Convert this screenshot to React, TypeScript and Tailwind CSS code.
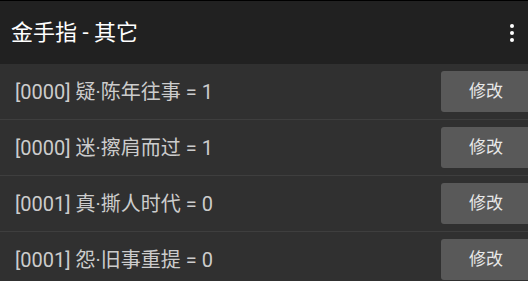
import React from 'react';

const cheats = [
  { id: '0000', name: '疑·陈年往事', value: 1 },
  { id: '0000', name: '迷·擦肩而过', value: 1 },
  { id: '0001', name: '真·撕人时代', value: 0 },
  { id: '0001', name: '怨·旧事重提', value: 0 },
];

export default function App() {
  return (
    <div
      className="w-[528px] h-[281px] overflow-hidden bg-black pt-px"
      style={{ fontFamily: 'Roboto, "Noto Sans CJK SC", sans-serif' }}
    >
      <header className="h-[63px] bg-[#212121] flex items-center justify-between pl-[11px] pr-[13px]">
        <h1 className="text-[22px] text-white">金手指 - 其它</h1>
        <button className="flex flex-col items-center gap-[3px] w-[6px]">
          <span className="w-[4px] h-[4px] rounded-full bg-white" />
          <span className="w-[4px] h-[4px] rounded-full bg-white" />
          <span className="w-[4px] h-[4px] rounded-full bg-white" />
        </button>
      </header>
      <ul className="bg-[#303030]">
        {cheats.map((c, i) => (
          <li
            key={i}
            className="h-[56px] flex items-center justify-between pl-[15px] border-b border-[#3e3e3e]"
          >
            <span className="text-[20px] text-[#cccccc]">
              [{c.id}] {c.name} = {c.value}
            </span>
            <button className="w-[90px] -mr-[3px] h-[41px] rounded-[3px] bg-[#595959] text-[17px] text-[#e8e8e8]">
              修改
            </button>
          </li>
        ))}
      </ul>
    </div>
  );
}
